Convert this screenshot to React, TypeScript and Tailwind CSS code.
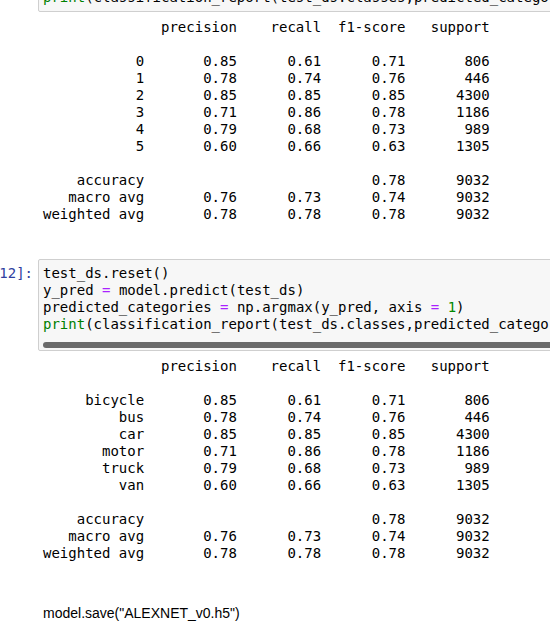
const mono = "font-['DejaVu_Sans_Mono',monospace] text-[14px] leading-[17px]";

type Row = [string, number, number, number, number];

const numbers: Omit<Row, 0>[] = [
  [0.85, 0.61, 0.71, 806],
  [0.78, 0.74, 0.76, 446],
  [0.85, 0.85, 0.85, 4300],
  [0.71, 0.86, 0.78, 1186],
  [0.79, 0.68, 0.73, 989],
  [0.6, 0.66, 0.63, 1305],
];

// mimics sklearn's classification_report text layout
function report(names: string[]) {
  const w = 12;
  const f = (v: number) => (" " + v.toFixed(2).padStart(9));
  const s = (v: string | number) => " " + String(v).padStart(9);
  const lines: string[] = [];
  lines.push(" ".repeat(w) + " " + s("precision") + s("recall") + s("f1-score") + s("support"));
  lines.push("");
  names.forEach((n, i) => {
    const [p, r, f1, sup] = numbers[i];
    lines.push(n.padStart(w) + " " + f(p) + f(r) + f(f1) + s(sup));
  });
  lines.push("");
  lines.push("accuracy".padStart(w) + " " + s("") + s("") + f(0.78) + s(9032));
  lines.push("macro avg".padStart(w) + " " + f(0.76) + f(0.73) + f(0.74) + s(9032));
  lines.push("weighted avg".padStart(w) + " " + f(0.78) + f(0.78) + f(0.78) + s(9032));
  return lines.join("\n");
}

function Output({ names }: { names: string[] }) {
  return (
    <pre className={`${mono} mt-[7px] pl-[43px] text-black whitespace-pre`}>{report(names)}</pre>
  );
}

const Builtin = ({ children }: { children: string }) => <span className="text-[#008000]">{children}</span>;
const Op = ({ children }: { children: string }) => <span className="text-[#aa22ff]">{children}</span>;

export default function App() {
  return (
    <div className="relative w-[550px] h-[629px] overflow-hidden bg-white">
      {/* previous cell, only its last line shows */}
      <div className="flex -mt-[12px]">
        <div className="w-[38px] shrink-0" />
        <div className="w-[530px] shrink-0 overflow-hidden rounded-[2px] border border-[#cfcfcf] bg-[#f7f7f7] pl-[4px] pb-[5px]">
          <pre className={`${mono} text-black`}>
            <Builtin>print</Builtin>(classification_report(test_ds.classes,predicted_categories))
          </pre>
        </div>
      </div>

      <Output names={["0", "1", "2", "3", "4", "5"]} />

      <div className="flex mt-[36px]">
        <div className="w-[38px] shrink-0 overflow-hidden flex justify-end pr-[5px] pt-[6px]">
          <span className={`${mono} whitespace-pre text-[#303f9f] shrink-0`}>In [12]:</span>
        </div>
        <div className="w-[530px] shrink-0 overflow-hidden rounded-[2px] border border-[#cfcfcf] bg-[#f7f7f7] pt-[5px] pb-[2px]">
          <pre className={`${mono} text-black pl-[4px]`}>
            {"test_ds.reset()\ny_pred "}
            <Op>=</Op>
            {" model.predict(test_ds)\npredicted_categories "}
            <Op>=</Op>
            {" np.argmax(y_pred, axis "}
            <Op>=</Op> <span className="text-[#008800]">1</span>
            {")\n"}
            <Builtin>print</Builtin>
            {"(classification_report(test_ds.classes,predicted_categories))"}
          </pre>
          <div className="mt-[9px] ml-[4px] h-[6px] rounded-[3px] bg-[#6b6b6b]" />
        </div>
      </div>

      <Output names={["bicycle", "bus", "car", "motor", "truck", "van"]} />

      <p className="mt-[41px] pl-[43px] font-['Liberation_Sans',Arial,sans-serif] text-[14px] leading-[20px] text-black">
        model.save("ALEXNET_v0.h5")
      </p>
    </div>
  );
}
